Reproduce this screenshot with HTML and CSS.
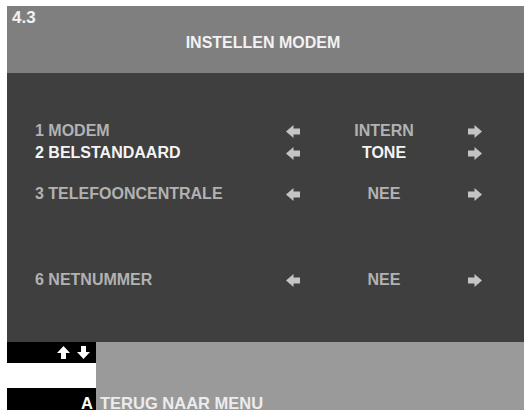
FILE: index.html
```html
<!DOCTYPE html>
<html>
<head>
<meta charset="utf-8">
<link rel="stylesheet" href="styles.css">
</head>
<body>
<div class="screen">
  <header class="head">
    <div class="page-no">4.3</div>
    <div class="title">INSTELLEN MODEM</div>
  </header>
  <main class="menu">
    <div class="row r1">
      <span class="label">1 MODEM</span>
      <svg class="arr" viewBox="0 0 14 13"><polygon points="0,6.5 7.5,0 7.5,3.5 14,3.5 14,9.5 7.5,9.5 7.5,13"/></svg>
      <span class="value">INTERN</span>
      <svg class="arr" viewBox="0 0 14 13"><polygon points="14,6.5 6.5,0 6.5,3.5 0,3.5 0,9.5 6.5,9.5 6.5,13"/></svg>
    </div>
    <div class="row r2 active">
      <span class="label">2 BELSTANDAARD</span>
      <svg class="arr" viewBox="0 0 14 13"><polygon points="0,6.5 7.5,0 7.5,3.5 14,3.5 14,9.5 7.5,9.5 7.5,13"/></svg>
      <span class="value">TONE</span>
      <svg class="arr" viewBox="0 0 14 13"><polygon points="14,6.5 6.5,0 6.5,3.5 0,3.5 0,9.5 6.5,9.5 6.5,13"/></svg>
    </div>
    <div class="row r3">
      <span class="label">3 TELEFOONCENTRALE</span>
      <svg class="arr" viewBox="0 0 14 13"><polygon points="0,6.5 7.5,0 7.5,3.5 14,3.5 14,9.5 7.5,9.5 7.5,13"/></svg>
      <span class="value">NEE</span>
      <svg class="arr" viewBox="0 0 14 13"><polygon points="14,6.5 6.5,0 6.5,3.5 0,3.5 0,9.5 6.5,9.5 6.5,13"/></svg>
    </div>
    <div class="row r6">
      <span class="label">6 NETNUMMER</span>
      <svg class="arr" viewBox="0 0 14 13"><polygon points="0,6.5 7.5,0 7.5,3.5 14,3.5 14,9.5 7.5,9.5 7.5,13"/></svg>
      <span class="value">NEE</span>
      <svg class="arr" viewBox="0 0 14 13"><polygon points="14,6.5 6.5,0 6.5,3.5 0,3.5 0,9.5 6.5,9.5 6.5,13"/></svg>
    </div>
  </main>
  <footer class="foot">
    <div class="key key-nav">
      <svg class="nav" viewBox="0 0 13 13"><polygon points="6.5,0 13,7 9,7 9,13 4,13 4,7 0,7"/></svg>
      <svg class="nav" viewBox="0 0 13 13"><polygon points="6.5,13 13,6 9,6 9,0 4,0 4,6 0,6"/></svg>
    </div>
    <div class="blank"></div>
    <div class="key key-a">A</div>
    <div class="action">TERUG NAAR MENU</div>
  </footer>
</div>
</body>
</html>
```

FILE: styles.css
```css
html, body {
  margin: 0;
  padding: 0;
  background: #ffffff;
}

body {
  font-family: "Liberation Sans", Arial, sans-serif;
  font-weight: bold;
}

.screen {
  margin: 6px 0 0 7px;
  width: 517px;
  height: 404px;
  display: flex;
  flex-direction: column;
}

.head {
  height: 67px;
  flex: none;
  box-sizing: border-box;
  background: #7f7f7f;
  color: #f2f2f2;
  padding: 3px 0 0 5px;
}

.page-no {
  font-size: 17px;
  line-height: 18px;
}

.title {
  font-size: 16px;
  line-height: 22px;
  margin-top: 5px;
  text-align: center;
  padding-right: 10px;
}

.menu {
  height: 269px;
  flex: none;
  box-sizing: border-box;
  background: #3f3f3f;
  padding: 47px 0 0 28px;
  color: #b2b2b2;
  font-size: 16px;
}

.row {
  display: grid;
  grid-template-columns: 251px 14px 168px 14px;
  align-items: center;
  height: 22px;
  line-height: 22px;
}

.row.active {
  color: #f4f4f4;
}

.r3 { margin-top: 19px; }
.r6 { margin-top: 64px; }

.value {
  text-align: center;
}

.arr {
  width: 14px;
  height: 13px;
  fill: #c4c4c4;
  margin-top: 1px;
}

.foot {
  flex: 1;
  background: #9a9a9a;
  display: grid;
  grid-template-columns: 89px 1fr;
  grid-template-rows: 21px 25px 22px;
}

.key {
  background: #000000;
  color: #ffffff;
}

.key-nav {
  grid-column: 1;
  grid-row: 1;
  display: flex;
  justify-content: flex-end;
  align-items: center;
  gap: 7px;
  padding-right: 6px;
}

.nav {
  width: 13px;
  height: 13px;
  fill: #ffffff;
}

.blank {
  grid-column: 1;
  grid-row: 2;
  background: #ffffff;
}

.key-a,
.action {
  grid-row: 3;
  font-size: 16.5px;
  line-height: 30px;
  height: 22px;
  overflow: visible;
}

.key-a {
  grid-column: 1;
  text-align: right;
  padding-right: 3px;
}

.action {
  grid-column: 2;
  color: #ececec;
  padding-left: 4px;
}
```
